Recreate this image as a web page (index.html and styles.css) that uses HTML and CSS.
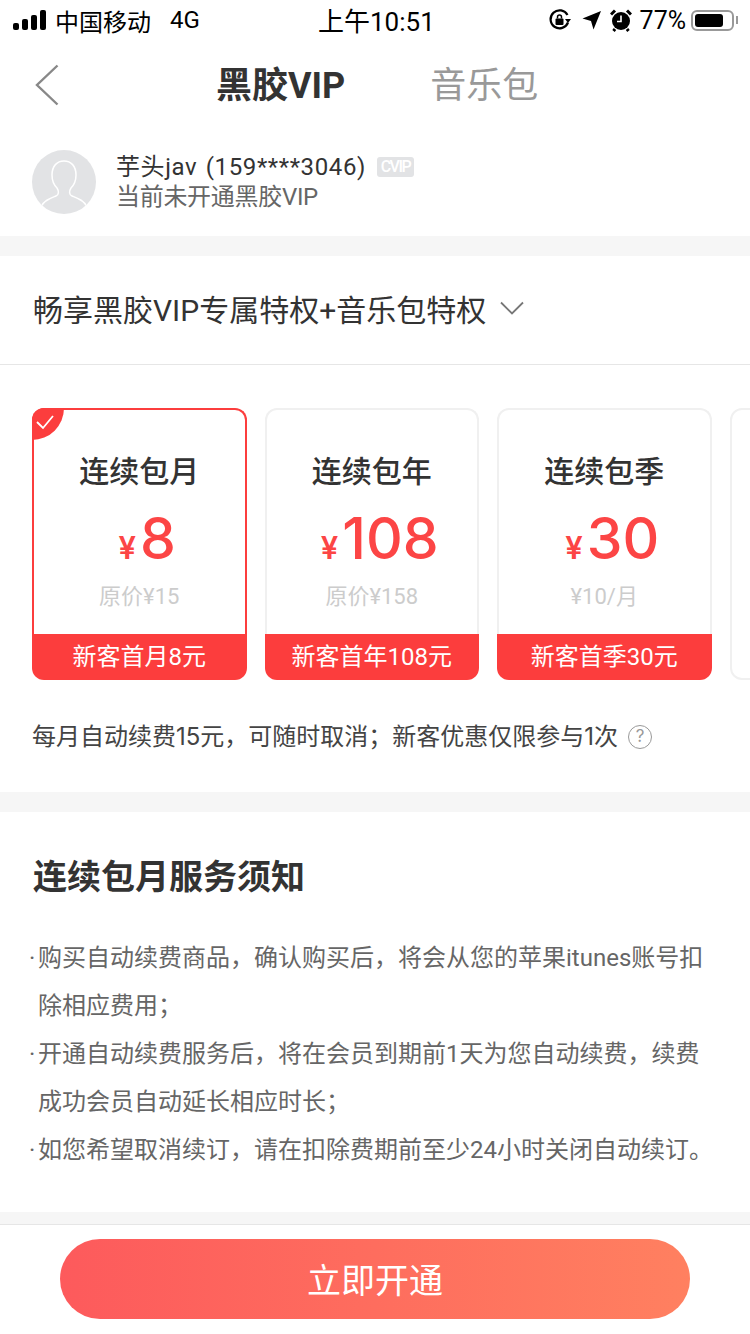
FILE: index.html
```html
<!DOCTYPE html>
<html lang="zh-CN">
<head>
    <meta charset="UTF-8">
    <meta name="viewport" content="width=device-width, initial-scale=1.0">
    <title>黑胶VIP</title>
    <link rel="stylesheet" href="styles.css">
</head>
<body>
    <div class="page">
        <div class="status-bar">
            <div class="status-left">
                <svg class="signal" width="36" height="20" viewBox="0 0 36 20"><rect x="0" y="13" width="6" height="7" rx="2"/><rect x="9" y="9" width="6" height="11" rx="2"/><rect x="18" y="5" width="6" height="15" rx="2"/><rect x="27" y="0" width="6" height="20" rx="2"/></svg>
                <span>中国移动</span>
                <span class="network">4G</span>
            </div>
            <div class="status-time">上午10:51</div>
            <div class="status-right">
                <svg width="24" height="24" viewBox="0 0 24 24"><path d="M20 14.500A9 9 0 1 1 19.500 7" fill="none" stroke="#000" stroke-width="2.200"/><path d="M17 11h6l-3 4z"/><rect x="7.500" y="10.500" width="8" height="6.500" rx="1"/><path d="M9.500 10.500V9a2 2 0 0 1 4 0v1.500" fill="none" stroke="#000" stroke-width="1.500"/></svg>
                <svg width="20" height="20" viewBox="0 0 20 20"><path d="M19 1 11.500 19.500 9 11 .5 8.500z"/></svg>
                <svg class="alarm" width="22" height="24" viewBox="0 0 22 24"><circle cx="11" cy="13" r="9"/><path d="M1 6.500 5 2.500M21 6.500 17 2.500M5 21l-1.500 2M17 21l1.500 2" stroke="#000" stroke-width="3"/><path d="M11 7.500V13.500H7" fill="none" stroke="#fff" stroke-width="1.600"/></svg>
                <span class="battery-pct">77%</span>
                <div class="battery"><div class="battery-fill"></div></div>
                <div class="battery-cap"></div>
            </div>
        </div>

        <div class="nav">
            <svg class="back" width="26" height="42" viewBox="0 0 26 42"><path d="M23.500 1.500 3 21l20.500 19.500" fill="none" stroke="#888" stroke-width="2.400"/></svg>
            <div class="tab active">黑胶VIP</div>
            <div class="tab">音乐包</div>
        </div>

        <div class="user">
            <div class="avatar">
                <svg width="64" height="64" viewBox="0 0 64 64"><path d="M9 57c3-7 10-9 15-11 3-1 3-5 1-8-3-3-5-8-5-13 0-9 5-14 12-14s12 5 12 14c0 5-2 10-5 13-2 3-2 7 1 8 5 2 12 4 15 11" fill="none" stroke="#fff" stroke-width="1.500"/></svg>
            </div>
            <div class="user-info">
                <div class="user-name">
                    <span class="user-nick">芋头jav (159****3046)</span>
                    <span class="cvip">CVIP</span>
                </div>
                <div class="user-state">当前未开通黑胶VIP</div>
            </div>
        </div>

        <div class="gap"></div>

        <div class="privilege">
            <span>畅享黑胶VIP专属特权+音乐包特权</span>
            <svg width="24" height="14" viewBox="0 0 24 14"><path d="M1 1.500 12 12.500 23 1.500" fill="none" stroke="#777" stroke-width="1.800"/></svg>
        </div>

        <div class="plans">
            <div class="plan-list">
                <div class="plan selected">
                    <svg class="check" width="32" height="32" viewBox="0 0 32 32"><path d="M0 0H32A32 32 0 0 1 0 32z" fill="#fc3d3d"/><path d="M5 14l6 6L21 8" fill="none" stroke="#fff" stroke-width="1.800"/></svg>
                    <div class="plan-body">
                        <div class="plan-name">连续包月</div>
                        <div class="plan-price"><span class="yen">¥</span>8</div>
                        <div class="plan-origin">原价¥15</div>
                    </div>
                    <div class="plan-tag">新客首月8元</div>
                </div>
                <div class="plan">
                    <div class="plan-body">
                        <div class="plan-name">连续包年</div>
                        <div class="plan-price"><span class="yen">¥</span>108</div>
                        <div class="plan-origin">原价¥158</div>
                    </div>
                    <div class="plan-tag">新客首年108元</div>
                </div>
                <div class="plan">
                    <div class="plan-body">
                        <div class="plan-name">连续包季</div>
                        <div class="plan-price"><span class="yen">¥</span>30</div>
                        <div class="plan-origin">¥10/月</div>
                    </div>
                    <div class="plan-tag">新客首季30元</div>
                </div>
                <div class="plan plan-next"></div>
            </div>
            <div class="plan-note">
                <span>每月自动续费15元，可随时取消；新客优惠仅限参与1次</span>
                <span class="help">?</span>
            </div>
        </div>

        <div class="gap"></div>

        <div class="notice">
            <h2>连续包月服务须知</h2>
            <ul class="notice-list">
                <li>购买自动续费商品，确认购买后，将会从您的苹果itunes账号扣除相应费用；</li>
                <li>开通自动续费服务后，将在会员到期前1天为您自动续费，续费成功会员自动延长相应时长；</li>
                <li>如您希望取消续订，请在扣除费期前至少24小时关闭自动续订。</li>
            </ul>
        </div>

        <div class="gap gap-small"></div>

        <div class="footer">
            <button class="open-btn">立即开通</button>
        </div>
    </div>
</body>
</html>
```

FILE: styles.css
```css
* {
    box-sizing: border-box;
}
body {
    margin: 0;
    background-color: white;
    font-family: Roboto, "Noto Sans CJK SC", sans-serif;
    color: #333;
}
.page {
    width: 750px;
    height: 1334px;
    overflow: hidden;
}
.status-bar {
    height: 44px;
    display: flex;
    align-items: center;
    justify-content: space-between;
    padding: 0 12px 4px 13px;
    color: #000;
    font-size: 24px;
    position: relative;
}
.status-left {
    display: flex;
    align-items: center;
}
.signal {
    margin-right: 6px;
}
.network {
    margin-left: 19px;
}
.status-time {
    font-size: 26px;
    position: absolute;
    left: 318px;
    margin-top: -2px;
}
.status-right {
    display: flex;
    align-items: center;
    gap: 10px;
}
.alarm {
    margin-left: -2px;
}
.battery-pct {
    margin-left: -2px;
    font-size: 25px;
}
.battery {
    width: 43px;
    height: 21px;
    border: 2px solid #999;
    border-radius: 6px;
    padding: 2px;
    margin-left: -5px;
}
.battery-fill {
    width: 28px;
    height: 100%;
    background-color: #000;
    border-radius: 3px;
}
.battery-cap {
    width: 2px;
    height: 8px;
    background-color: #999;
    margin-left: -8px;
}
.nav {
    height: 84px;
    display: flex;
    align-items: center;
    padding: 0 0 8px 34px;
}
.back {
    margin: 6px 156px 0 0;
}
.tab {
    font-size: 36px;
    color: #999;
    margin-right: 85px;
}
.tab.active {
    color: #333;
    font-weight: 700;
}
.user {
    height: 108px;
    display: flex;
    align-items: center;
    padding: 0 32px;
}
.avatar {
    width: 64px;
    height: 64px;
    border-radius: 50%;
    background-color: #e2e3e5;
    overflow: hidden;
    margin-right: 20px;
}
.avatar svg {
    display: block;
}
.user-info {
    font-size: 24px;
    line-height: 30px;
}
.user-name {
    display: flex;
    align-items: center;
    gap: 11px;
}
.user-nick {
    letter-spacing: 0.6px;
    word-spacing: 2px;
}
.cvip {
    width: 37px;
    font-size: 16px;
    line-height: 20px;
    letter-spacing: -1.5px;
    text-align: center;
    background-color: #e2e3e5;
    color: white;
    border-radius: 3px;
    font-weight: 500;
}
.user-state {
    color: #666;
    letter-spacing: -0.3px;
}
.gap {
    height: 20px;
    background-color: #f6f6f6;
}
.gap-small {
    height: 12px;
}
.privilege {
    height: 109px;
    display: flex;
    align-items: center;
    gap: 14px;
    padding: 0 33px 4px;
    font-size: 30px;
    border-bottom: 1px solid #e6e6e6;
}
.plans {
    height: 427px;
    padding: 43px 0 0 32px;
    overflow: hidden;
}
.plan-list {
    display: flex;
    gap: 18px;
    width: 800px;
}
.plan {
    width: 214.5px;
    height: 272px;
    flex-shrink: 0;
    display: flex;
    flex-direction: column;
    position: relative;
}
.check {
    position: absolute;
    left: 0;
    top: 0;
    border-top-left-radius: 12px;
}
.plan-body {
    flex: 1;
    text-align: center;
    padding-top: 42px;
    border: 2px solid #f0f0f0;
    border-bottom: 0;
    border-radius: 12px 12px 0 0;
}
.plan.selected .plan-body {
    border-color: #fc3d3d;
}
.plan-name {
    font-size: 30px;
    line-height: 40px;
    font-weight: 500;
}
.plan-price {
    font-family: Inter, "Noto Sans CJK SC", sans-serif;
    font-size: 57px;
    line-height: 66px;
    margin-top: 14px;
    padding-left: 16px;
    color: #fc4545;
    font-weight: 500;
}
.yen {
    font-size: 31px;
    font-weight: 600;
    margin-right: 4px;
}
.plan-origin {
    font-size: 22px;
    line-height: 30px;
    margin-top: 1px;
    color: #ccc;
}
.plan-tag {
    height: 46px;
    background-color: #fc3d3d;
    border-radius: 0 0 12px 12px;
    color: white;
    font-size: 24px;
    line-height: 46px;
    text-align: center;
}
.plan-next {
    border: 2px solid #f0f0f0;
    border-radius: 12px;
}
.plan-note {
    display: flex;
    align-items: center;
    margin-top: 41px;
    font-family: Inter, "Noto Sans CJK SC", sans-serif;
    font-size: 24px;
    line-height: 32px;
    color: #444;
}
.help {
    width: 24px;
    height: 24px;
    margin-left: 10px;
    border: 1.5px solid #999;
    border-radius: 50%;
    color: #999;
    font-size: 17px;
    line-height: 21px;
    text-align: center;
}
.notice {
    height: 400px;
    padding: 42px 33px 0;
}
.notice h2 {
    margin: 0;
    font-size: 34px;
    line-height: 46px;
    font-weight: 700;
}
.notice-list {
    list-style-type: none;
    margin: 34px 0 0;
    padding: 0 0 0 5px;
    font-size: 24px;
    line-height: 48px;
    color: #666;
}
.notice-list li {
    position: relative;
}
.notice-list li::before {
    content: "·";
    position: absolute;
    left: -9px;
}
.footer {
    height: 110px;
    border-top: 1px solid #e6e6e6;
    padding: 14px 60px 0;
}
.open-btn {
    display: block;
    width: 630px;
    height: 80px;
    padding: 0 0 2px;
    border: none;
    border-radius: 40px;
    background: linear-gradient(to right, #fd5a5c, #ff8060);
    color: white;
    font-family: inherit;
    font-size: 34px;
}
```
